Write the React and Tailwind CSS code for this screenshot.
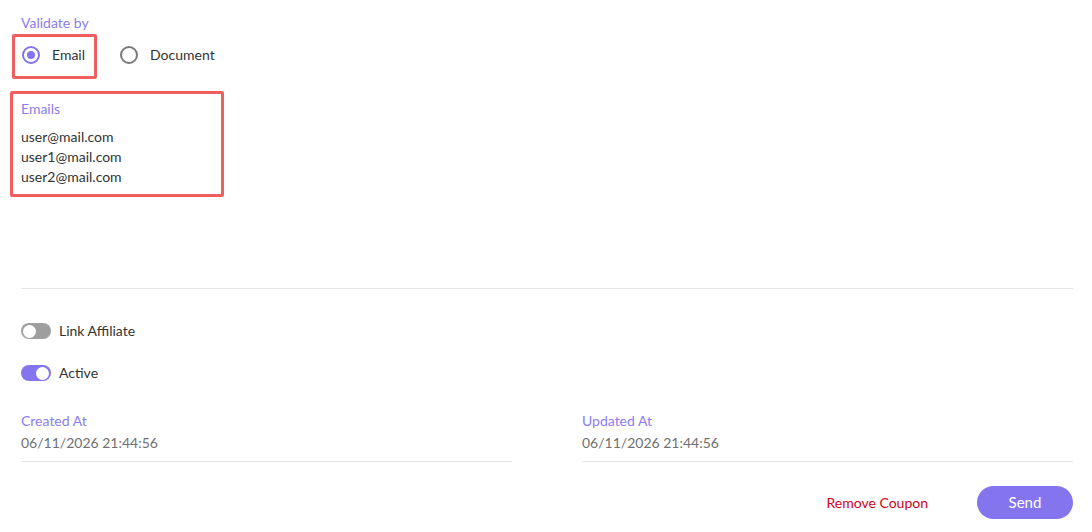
import React from "react";

function Radio({ checked }) {
  return (
    <span
      className={
        "flex h-[18px] w-[18px] shrink-0 items-center justify-center rounded-full border-2 " +
        (checked ? "border-[#8474ee]" : "border-[#7a7a7a]")
      }
    >
      {checked && <span className="h-[8px] w-[8px] rounded-full bg-[#8474ee]" />}
    </span>
  );
}

function Toggle({ on }) {
  return (
    <span
      className={
        "flex h-[16px] w-[30px] shrink-0 items-center rounded-full px-[2px] " +
        (on ? "justify-end bg-[#8474ee]" : "justify-start bg-[#9e9e9e]")
      }
    >
      <span className="h-[13px] w-[13px] rounded-full bg-white" />
    </span>
  );
}

export default function App() {
  return (
    <div
      className="min-h-[532px] w-full bg-white pl-[21px] pr-[19px] pt-[13px] text-[14px] text-[#333333]"
      style={{ fontFamily: "Lato, 'Noto Sans', sans-serif" }}
    >
      <div className="h-5 leading-5 text-[#8c7cf0]">Validate by</div>
      <div className="mt-px flex items-start">
        <div className="ml-[-9px] h-[45px] rounded-[2px] border-[3px] border-[#f05f5f] pl-[7px] pr-[9px] pt-[8px]">
          <div className="flex h-5 items-center gap-[12px]">
            <Radio checked />
            <span className="leading-5">Email</span>
          </div>
        </div>
        <div className="ml-[23px] mt-[11px] flex h-5 items-center gap-[12px]">
          <Radio />
          <span className="leading-5">Document</span>
        </div>
      </div>
      <div className="ml-[-11px] mt-[12px] w-[214px] rounded-[2px] border-[3px] border-[#f05f5f] pb-[7px] pl-[8px] pt-[5px]">
        <div className="h-5 leading-5 text-[#8c7cf0]">Emails</div>
        <div className="mt-[8px] leading-5">
          <div>user@mail.com</div>
          <div>user1@mail.com</div>
          <div>user2@mail.com</div>
        </div>
      </div>
      <div className="mt-[91px] h-px bg-[#e6e6e6]" />
      <div className="mt-[32px] flex h-5 items-center gap-[8px]">
        <Toggle />
        <span className="leading-5">Link Affiliate</span>
      </div>
      <div className="mt-[22px] flex h-5 items-center gap-[8px]">
        <Toggle on />
        <span className="leading-5">Active</span>
      </div>
      <div className="mt-[28px] grid grid-cols-2 gap-[70px]">
        <div className="border-b border-[#e6e6e6] pb-[8px]">
          <div className="h-5 leading-5 text-[#8c7cf0]">Created At</div>
          <div className="mt-[2px] h-5 leading-5 text-[#707070]">06/11/2026 21:44:56</div>
        </div>
        <div className="border-b border-[#e6e6e6] pb-[8px]">
          <div className="h-5 leading-5 text-[#8c7cf0]">Updated At</div>
          <div className="mt-[2px] h-5 leading-5 text-[#707070]">06/11/2026 21:44:56</div>
        </div>
      </div>
      <div className="mt-[24px] flex items-center justify-end gap-[49px]">
        <button className="leading-5 text-[#d0021b]">Remove Coupon</button>
        <button className="h-[33px] w-[96px] rounded-full bg-[#8474ee] text-[15px] text-white">Send</button>
      </div>
    </div>
  );
}
